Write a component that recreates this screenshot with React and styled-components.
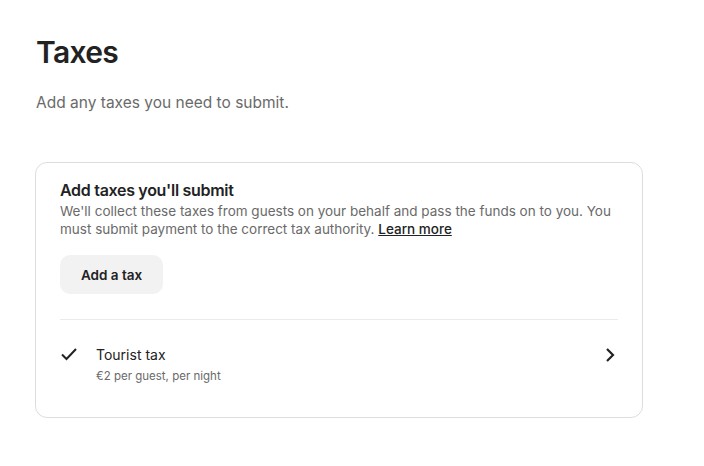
import React from 'react';
import styled, { createGlobalStyle } from 'styled-components';

const GlobalStyle = createGlobalStyle`
  body {
    margin: 0;
    background: #fff;
    font-family: Inter, "Noto Sans", sans-serif;
    color: #222;
  }
`;

const Page = styled.div`
  padding: 34px 0 0 36px;
  width: 607px;
`;

const Heading = styled.h1`
  margin: 0;
  font-size: 30px;
  font-weight: 600;
  letter-spacing: -0.7px;
  line-height: 36px;
`;

const Lead = styled.p`
  margin: 22px 0 0;
  font-size: 15.5px;
  line-height: 22px;
  color: #6a6a6a;
`;

const Card = styled.section`
  margin: 48px 0 0 -1px;
  border: 1px solid #dddddd;
  border-radius: 12px;
  padding: 16px 24px 33px;
`;

const CardTitle = styled.h2`
  margin: 0;
  font-size: 16px;
  font-weight: 600;
  line-height: 22px;
  letter-spacing: -0.3px;
`;

const CardText = styled.p`
  margin: 1px 0 0;
  font-size: 13.5px;
  line-height: 18px;
  color: #6a6a6a;
`;

const Link = styled.a`
  color: #222;
  font-weight: 500;
  text-decoration: underline;
`;

const Button = styled.button`
  margin-top: 17px;
  height: 39px;
  padding: 0 21px;
  border: none;
  border-radius: 10px;
  background: #f2f2f2;
  font-family: inherit;
  font-size: 13.5px;
  font-weight: 600;
  color: #222;
  cursor: pointer;
`;

const Divider = styled.hr`
  margin: 25px 0 0;
  border: none;
  border-top: 1px solid #ebebeb;
`;

const Row = styled.div`
  display: flex;
  align-items: flex-start;
  padding-top: 25px;
`;

const CheckIcon = styled.div`
  width: 36px;
  padding-top: 1px;
  display: flex;
`;

const Info = styled.div`
  flex: 1;
`;

const Name = styled.div`
  font-size: 14px;
  line-height: 20px;
  color: #222;
`;

const Sub = styled.div`
  margin-top: 3px;
  font-size: 11.5px;
  line-height: 16px;
  color: #6a6a6a;
`;

const Chevron = styled.div`
  padding: 2px 3px 0 0;
  display: flex;
`;

export default function App() {
  return (
    <>
      <GlobalStyle />
      <Page>
        <Heading>Taxes</Heading>
        <Lead>Add any taxes you need to submit.</Lead>
        <Card>
          <CardTitle>Add taxes you'll submit</CardTitle>
          <CardText>
            We'll collect these taxes from guests on your behalf and pass the funds on to you. You
            must submit payment to the correct tax authority. <Link href="#">Learn more</Link>
          </CardText>
          <Button type="button">Add a tax</Button>
          <Divider />
          <Row>
            <CheckIcon>
              <svg width="18" height="16" viewBox="0 0 18 16" fill="none">
                <path d="M2 8.5 L6.5 13 L16 3" stroke="#222" strokeWidth="2" />
              </svg>
            </CheckIcon>
            <Info>
              <Name>Tourist tax</Name>
              <Sub>€2 per guest, per night</Sub>
            </Info>
            <Chevron>
              <svg width="10" height="16" viewBox="0 0 10 16" fill="none">
                <path d="M2 2 L8 8 L2 14" stroke="#222" strokeWidth="2.2" />
              </svg>
            </Chevron>
          </Row>
        </Card>
      </Page>
    </>
  );
}
